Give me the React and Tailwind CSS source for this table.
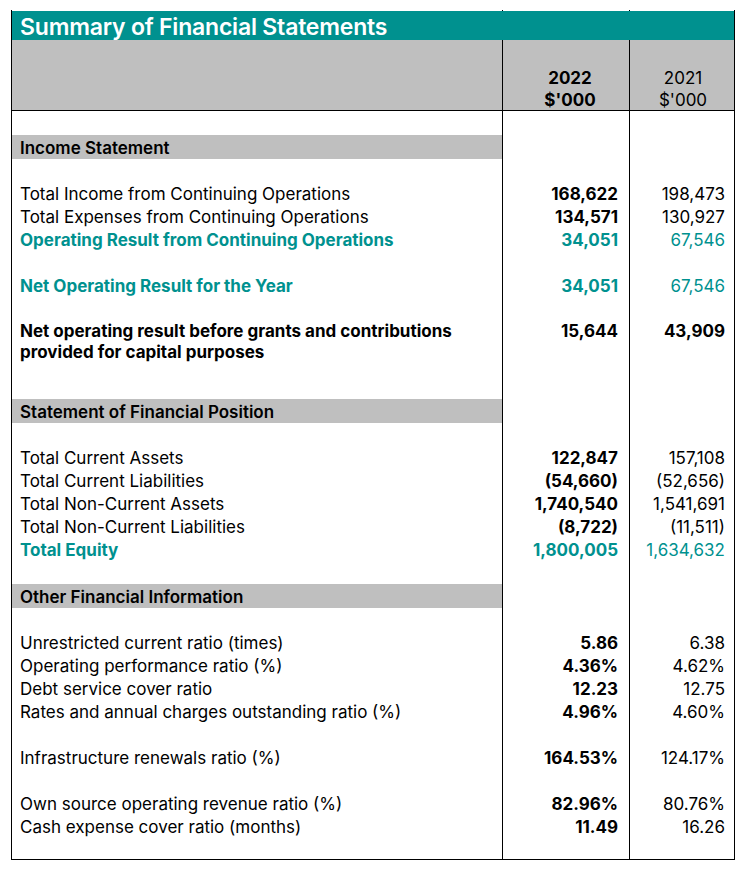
import React from "react";

const TEAL = "text-[#00918f]";

function Row({ h = "h-[23px]", c1, c2, c3, band = false, extra = "" }) {
  return (
    <div className={`flex ${h} ${extra}`}>
      <div
        className={`w-[492px] border-l border-r border-black pl-[8px] pt-[2px] flex items-center ${
          band ? "bg-[#bfbfbf]" : ""
        }`}
      >
        {c1}
      </div>
      <div className="w-[127px] border-r border-black pr-[11px] pt-[2px] flex items-center justify-end">
        {c2}
      </div>
      <div className="w-[105px] border-r border-black pr-[9px] pt-[2px] flex items-center justify-end">
        {c3}
      </div>
    </div>
  );
}

function Data({ label, a, b, kind = "normal" }) {
  const teal = kind === "teal";
  const bold = kind === "bold";
  return (
    <Row
      c1={
        <span
          className={`${teal ? TEAL + " font-bold" : bold ? "font-bold text-black" : "text-black"}`}
        >
          {label}
        </span>
      }
      c2={<span className={`font-bold ${teal ? TEAL : "text-black"}`}>{a}</span>}
      c3={
        <span className={`${teal ? TEAL : "text-black"} ${bold ? "font-bold" : ""}`}>{b}</span>
      }
    />
  );
}

function Empty({ h = "h-[23px]" }) {
  return <Row h={h} />;
}

function Band({ label }) {
  return <Row h="h-[24px]" band c1={<span className="font-semibold text-black">{label}</span>} />;
}

export default function App() {
  return (
    <div
      className="w-[748px] h-[872px] bg-white pt-[10px] pl-[11px] text-[17px] leading-[23px]"
      style={{ fontFamily: "Inter, 'Liberation Sans', sans-serif" }}
    >
      {/* ticks */}
      <div className="flex h-[1px]">
        <div className="w-[492px] border-l border-r border-black" />
        <div className="w-[127px] border-r border-black" />
        <div className="w-[105px] border-r border-black" />
      </div>
      {/* title */}
      <div className="flex h-[29px] w-[724px] border-l border-r border-black bg-[#00918f] items-center pl-[8px] pt-[3px]">
        <span className="text-white text-[23px] font-semibold tracking-[-0.2px]">
          Summary of Financial Statements
        </span>
      </div>
      {/* header */}
      <div className="flex h-[71px] w-[724px] bg-[#bfbfbf]">
        <div className="w-[492px] border-l border-r border-b border-black" />
        <div className="w-[127px] border-r border-b border-black flex flex-col items-center pt-[27px] leading-[22px] font-bold text-black pl-[8px]">
          <span>2022</span>
          <span>$'000</span>
        </div>
        <div className="w-[105px] border-r border-b border-black flex flex-col items-center pt-[27px] leading-[22px] text-black pl-[2px]">
          <span>2021</span>
          <span>$'000</span>
        </div>
      </div>

      <Empty h="h-[24px]" />
      <Band label="Income Statement" />
      <Empty />
      <Data label="Total Income from Continuing Operations" a="168,622" b="198,473" />
      <Data label="Total Expenses from Continuing Operations" a="134,571" b="130,927" />
      <Data label="Operating Result from Continuing Operations" a="34,051" b="67,546" kind="teal" />
      <Empty />
      <Data label="Net Operating Result for the Year" a="34,051" b="67,546" kind="teal" />
      <Empty />
      <div className="flex h-[42px]">
        <div className="w-[492px] border-l border-r border-black pl-[8px] pt-[1px] font-bold text-black leading-[21px]">
          Net operating result before grants and contributions
          <br />
          provided for capital purposes
        </div>
        <div className="w-[127px] border-r border-black pr-[11px] pt-[1px] text-right font-bold text-black leading-[21px]">
          15,644
        </div>
        <div className="w-[105px] border-r border-black pr-[9px] pt-[1px] text-right font-bold text-black leading-[21px]">
          43,909
        </div>
      </div>
      <Empty h="h-[37px]" />
      <Band label="Statement of Financial Position" />
      <Empty />
      <Data label="Total Current Assets" a="122,847" b="157,108" />
      <Data label="Total Current Liabilities" a="(54,660)" b="(52,656)" />
      <Data label="Total Non-Current Assets" a="1,740,540" b="1,541,691" />
      <Data label="Total Non-Current Liabilities" a="(8,722)" b="(11,511)" />
      <Data label="Total Equity" a="1,800,005" b="1,634,632" kind="teal" />
      <Empty />
      <Band label="Other Financial Information" />
      <Empty />
      <Data label="Unrestricted current ratio (times)" a="5.86" b="6.38" />
      <Data label="Operating performance ratio (%)" a="4.36%" b="4.62%" />
      <Data label="Debt service cover ratio" a="12.23" b="12.75" />
      <Data label="Rates and annual charges outstanding ratio (%)" a="4.96%" b="4.60%" />
      <Empty />
      <Data label="Infrastructure renewals ratio (%)" a="164.53%" b="124.17%" />
      <Empty />
      <Data label="Own source operating revenue ratio (%)" a="82.96%" b="80.76%" />
      <Data label="Cash expense cover ratio (months)" a="11.49" b="16.26" />
      <Row h="h-[22px]" extra="[&>div]:border-b" />
    </div>
  );
}
